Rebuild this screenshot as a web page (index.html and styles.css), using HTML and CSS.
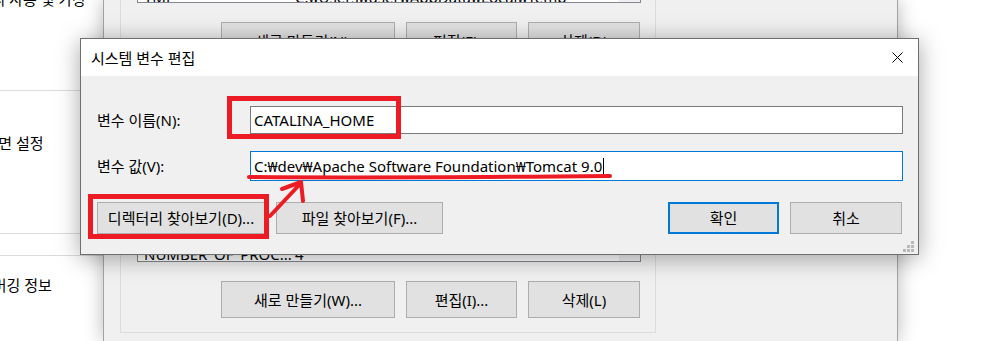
FILE: index.html
```html
<!DOCTYPE html>
<html lang="ko">
<head>
    <meta charset="UTF-8">
    <title>시스템 변수 편집</title>
    <link rel="stylesheet" href="styles.css">
</head>
<body>
    <div class="desktop">
        <!-- system properties window, mostly hidden -->
        <div class="sysprops">
            <p class="sp-text sp-perf">메모리 사용 및 가상</p>
            <div class="sp-rule rule-a"></div>
            <p class="sp-text sp-profile">바탕 화면 설정</p>
            <div class="sp-rule rule-b"></div>
            <div class="sp-rule rule-c"></div>
            <p class="sp-text sp-boot">디버깅 정보</p>
        </div>

        <!-- environment variables window -->
        <div class="envwin">
            <div class="env-body">
                <div class="group group-user">
                    <div class="listbox lb-user">
                        <div class="lb-rows">
                            <div class="lb-row"><span class="lb-name">TMP</span><span>C:₩Users₩user₩AppData₩Local₩Temp</span></div>
                        </div>
                        <div class="lb-scroll"></div>
                    </div>
                    <div class="btn-row">
                        <button class="btn btn-new">새로 만들기(N)...</button>
                        <button class="btn btn-edit">편집(E)...</button>
                        <button class="btn btn-del">삭제(D)</button>
                    </div>
                </div>
                <div class="group group-sys">
                    <div class="listbox lb-sys">
                        <div class="lb-rows">
                            <div class="lb-row"><span class="lb-name">NUMBER_OF_PROC...</span><span>4</span></div>
                        </div>
                        <div class="lb-scroll"></div>
                    </div>
                    <div class="btn-row">
                        <button class="btn btn-new">새로 만들기(W)...</button>
                        <button class="btn btn-edit">편집(I)...</button>
                        <button class="btn btn-del">삭제(L)</button>
                    </div>
                </div>
            </div>
        </div>

        <!-- edit dialog -->
        <div class="dialog">
            <div class="titlebar">
                <span class="title">시스템 변수 편집</span>
                <span class="close">
                    <svg width="11" height="11" viewBox="0 0 11 11">
                        <path d="M0.5 0.5 L10.5 10.5 M10.5 0.5 L0.5 10.5" stroke="#000" stroke-width="1" fill="none"/>
                    </svg>
                </span>
            </div>
            <div class="dlg-body">
                <div class="field">
                    <label class="field-label" for="varName">변수 이름(N):</label>
                    <div class="input" id="varName">CATALINA_HOME</div>
                </div>
                <div class="field field-value">
                    <label class="field-label" for="varValue">변수 값(V):</label>
                    <div class="input input-focus" id="varValue">C:₩dev₩Apache Software Foundation₩Tomcat 9.0<span class="caret"></span></div>
                </div>
                <div class="dlg-buttons">
                    <button class="btn btn-browse-dir">디렉터리 찾아보기(D)...</button>
                    <button class="btn btn-browse-file">파일 찾아보기(F)...</button>
                    <span class="spacer"></span>
                    <button class="btn btn-ok">확인</button>
                    <button class="btn btn-cancel">취소</button>
                </div>
            </div>
            <svg class="grip" width="12" height="12" viewBox="0 0 12 12">
                <rect x="8" y="0" width="3" height="3" fill="#b9b9b9"/>
                <rect x="4" y="4" width="3" height="3" fill="#b9b9b9"/>
                <rect x="8" y="4" width="3" height="3" fill="#b9b9b9"/>
                <rect x="0" y="8" width="3" height="3" fill="#b9b9b9"/>
                <rect x="4" y="8" width="3" height="3" fill="#b9b9b9"/>
                <rect x="8" y="8" width="3" height="3" fill="#b9b9b9"/>
            </svg>
        </div>

        <!-- red markup drawn over the screenshot -->
        <div class="mark mark-name"></div>
        <div class="mark mark-dir"></div>
        <svg class="scribble" width="995" height="341" viewBox="0 0 995 341">
            <path d="M249 177 C 350 178, 500 177, 610 176" stroke="#ed1c24" stroke-width="4" stroke-linecap="round" fill="none"/>
            <path d="M270 216 L301 183 M282 189 L301 182 L303 201" stroke="#ed1c24" stroke-width="4" stroke-linecap="round" stroke-linejoin="round" fill="none"/>
        </svg>
    </div>
</body>
</html>
```

FILE: styles.css
```css
/* page */
body {
    margin: 0;
    font-family: "Noto Sans", "Noto Sans CJK KR", sans-serif;
    font-size: 15px;
    color: #000;
    background: #fff;
}

.desktop {
    position: relative;
    width: 995px;
    height: 341px;
    overflow: hidden;
    background: #fff;
}

/* system properties (left) */
.sysprops {
    width: 103px;
    height: 341px;
    overflow: hidden;
}

.sp-text {
    margin: 0;
    height: 20px;
    line-height: 20px;
    white-space: nowrap;
}

.sp-perf {
    margin-top: -11px;
    margin-left: -36px;
}

.sp-profile {
    margin-top: 42px;
    margin-left: -47px;
}

.sp-boot {
    margin-top: 19px;
    margin-left: -21px;
}

.sp-rule {
    height: 1px;
    background: #dcdcdc;
}

.rule-a { margin-top: 81px; }
.rule-b { margin-top: 80px; }
.rule-c { margin-top: 21px; }

/* environment variables window */
.envwin {
    position: absolute;
    left: 103px;
    top: 0;
    width: 795px;
    height: 341px;
    box-sizing: border-box;
    background: #f0f0f0;
    border-left: 1px solid #a3a3a3;
    border-right: 1px solid #a3a3a3;
    box-shadow: 0 0 18px rgba(0, 0, 0, 0.28);
    overflow: hidden;
}

.env-body {
    margin-top: -110px;
    padding-left: 16px;
}

.group {
    width: 536px;
    box-sizing: border-box;
    border: 1px solid #dcdcdc;
    padding-left: 16px;
    padding-right: 14px;
}

.group-user {
    height: 180px;
    padding-top: 19px;
}

.group-sys {
    margin-top: 9px;
    height: 254px;
    padding-top: 29px;
}

.listbox {
    position: relative;
    width: 504px;
    box-sizing: border-box;
    border: 1px solid #828790;
    background: #fff;
    overflow: hidden;
}

.lb-user { height: 93px; }
.lb-sys { height: 153px; }

.lb-rows {
    height: 100%;
    display: flex;
    flex-direction: column;
    justify-content: flex-end;
}

.lb-row {
    display: flex;
    height: 20px;
    line-height: 20px;
    padding-left: 6px;
    white-space: nowrap;
}

.lb-user .lb-row { margin-bottom: -5px; }
.lb-sys .lb-row { margin-bottom: -3px; }

.lb-name {
    width: 151px;
}

.lb-scroll {
    position: absolute;
    top: 0;
    right: 0;
    bottom: 0;
    width: 21px;
    background: #f0f0f0;
}

.btn-row {
    display: flex;
    justify-content: flex-end;
    gap: 11px;
    margin-top: 19px;
    margin-right: 1px;
}

.btn {
    font-family: inherit;
    font-size: 15px;
    color: #000;
    background: #e1e1e1;
    border: 1px solid #adadad;
    box-sizing: border-box;
    padding: 0;
    line-height: 20px;
    white-space: nowrap;
}

.btn-row .btn { height: 37px; }
.btn-new { width: 174px; }
.btn-edit { width: 111px; }
.btn-del { width: 112px; }

/* edit dialog */
.dialog {
    position: absolute;
    left: 80px;
    top: 38px;
    width: 839px;
    height: 217px;
    box-sizing: border-box;
    border: 1px solid #6e6e6e;
    background: #f0f0f0;
    box-shadow: 0 3px 22px rgba(0, 0, 0, 0.35);
}

.titlebar {
    display: flex;
    align-items: center;
    justify-content: space-between;
    height: 37px;
    background: #fff;
}

.title {
    padding-left: 10px;
    line-height: 20px;
}

.close {
    display: flex;
    align-items: center;
    justify-content: center;
    width: 42px;
    height: 37px;
}

.dlg-body {
    padding: 30px 15px 20px 16px;
}

.field {
    display: flex;
    align-items: center;
}

.field-value {
    margin-top: 17px;
}

.field-label {
    width: 153px;
    flex-shrink: 0;
    line-height: 20px;
}

.input {
    flex: 1;
    height: 28px;
    box-sizing: border-box;
    border: 1px solid #7a7a7a;
    background: #fff;
    padding-left: 3px;
    line-height: 26px;
    white-space: nowrap;
    display: flex;
    align-items: center;
}

.input-focus {
    height: 30px;
    border-color: #0078d7;
}

.caret {
    display: inline-block;
    width: 1px;
    height: 17px;
    margin-left: 1px;
    background: #000;
}

.dlg-buttons {
    display: flex;
    margin-top: 21px;
}

.dlg-buttons .btn { height: 32px; }

.btn-browse-dir {
    width: 168px;
    margin-right: 11px;
}

.btn-browse-file { width: 167px; }

.spacer { flex: 1; }

.btn-ok {
    width: 111px;
    border: 2px solid #0078d7;
    margin-right: 11px;
}

.btn-cancel {
    width: 112px;
    margin-right: 1px;
}

.grip {
    position: absolute;
    right: 3px;
    bottom: 1px;
}

/* red markup */
.mark {
    position: absolute;
    border: 5px solid #ed1c24;
    box-sizing: border-box;
}

.mark-name {
    left: 227px;
    top: 96px;
    width: 174px;
    height: 43px;
}

.mark-dir {
    left: 88px;
    top: 194px;
    width: 181px;
    height: 45px;
}

.scribble {
    position: absolute;
    left: 0;
    top: 0;
    pointer-events: none;
}
```
